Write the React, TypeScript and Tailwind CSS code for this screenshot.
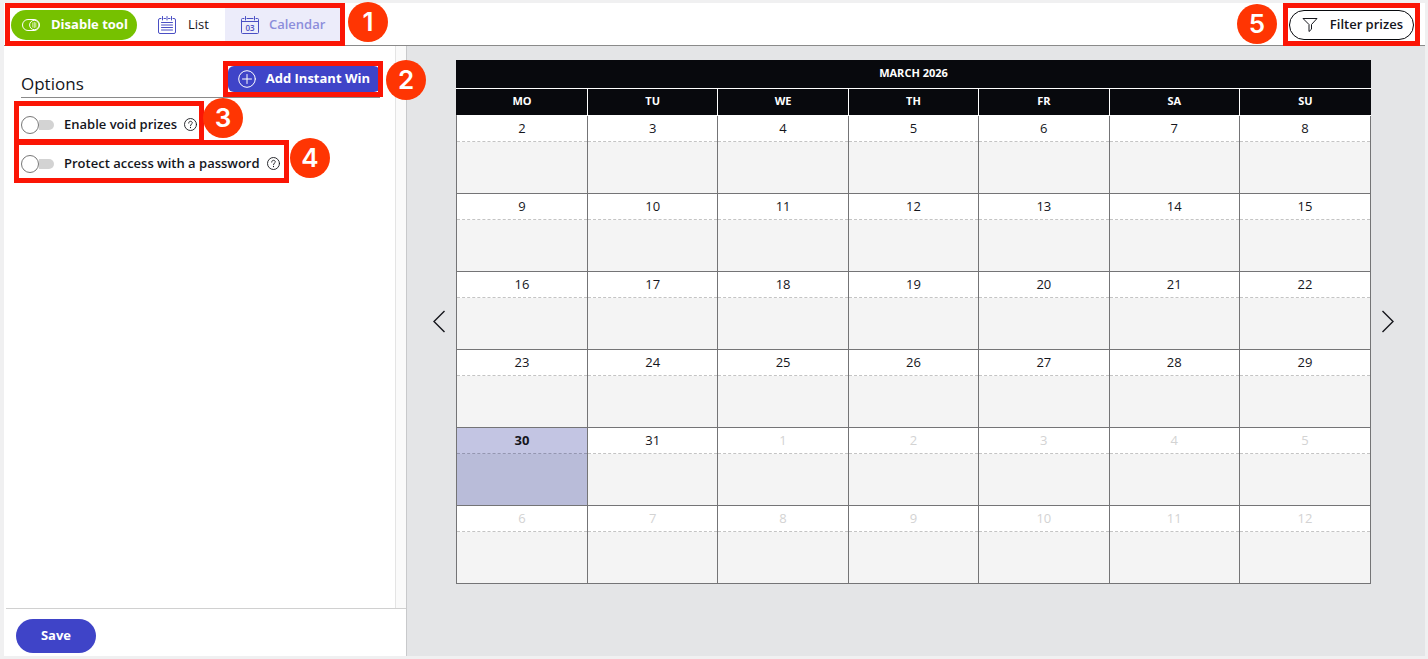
import React from 'react';
import clsx from 'clsx';

const weekDays = ['MO', 'TU', 'WE', 'TH', 'FR', 'SA', 'SU'];

const TODAY = 30;
const DAYS_IN_MONTH = 31;
const FIRST_DAY = 2;

const weeks = Array.from({ length: 6 }, (_, week) =>
  Array.from({ length: 7 }, (_, day) => {
    const n = FIRST_DAY + week * 7 + day;
    const outside = n > DAYS_IN_MONTH;
    return { label: outside ? n - DAYS_IN_MONTH : n, outside, today: n === TODAY };
  })
);

function ToggleIcon() {
  return (
    <svg className="w-[18px] h-3" viewBox="0 0 18 12" fill="none" stroke="currentColor" strokeWidth="1">
      <rect x="0.5" y="0.5" width="17" height="11" rx="5.5" />
      <circle cx="12.3" cy="6" r="4.7" />
      <path d="M10.8 3.5v5M12.3 3v6M13.8 3.5v5" strokeWidth="0.7" />
    </svg>
  );
}

function ListIcon() {
  return (
    <svg className="w-[18px] h-[18px]" viewBox="0 0 18 18" fill="none" stroke="#4a4fc4" strokeWidth="1" strokeLinecap="round">
      <path d="M3 2.5H2A1.5 1.5 0 0 0 .5 4v12A1.5 1.5 0 0 0 2 17.5h14a1.5 1.5 0 0 0 1.5-1.5V4A1.5 1.5 0 0 0 16 2.5h-1M6 2.5h1.5M10.5 2.5H12" />
      <path d="M4.5 0.5v3.5M9 0.5v3.5M13.5 0.5v3.5" />
      <path d="M3.5 6.5h11M3.5 9h11M3.5 11.5h11M3.5 14h11" />
    </svg>
  );
}

function CalendarIcon() {
  return (
    <svg className="w-[18px] h-[18px]" viewBox="0 0 18 18" fill="none" stroke="#4a4fc4" strokeWidth="1" strokeLinecap="round">
      <path d="M3 2.5H1.5a1 1 0 0 0-1 1v13a1 1 0 0 0 1 1h15a1 1 0 0 0 1-1v-13a1 1 0 0 0-1-1H15M6 2.5h6M0.5 5.5h17" />
      <path d="M4.5 0.5v3.5M13.5 0.5v3.5" />
      <text x="9" y="14.5" textAnchor="middle" fontSize="8" fontWeight="600" fill="#4a4fc4" stroke="none">
        03
      </text>
    </svg>
  );
}

function PlusIcon() {
  return (
    <svg className="w-[18px] h-[18px]" viewBox="0 0 18 18" fill="none" stroke="currentColor" strokeWidth="1" strokeLinecap="round">
      <circle cx="9" cy="9" r="8.3" />
      <path d="M9 4.5v9M4.5 9h9" />
    </svg>
  );
}

function FunnelIcon() {
  return (
    <svg className="w-4 h-4" viewBox="0 0 16 16" fill="none" stroke="currentColor" strokeWidth="1" strokeLinejoin="round">
      <path d="M1 1.5h14l-5.5 6v4.7L7 14.5v-7z" />
    </svg>
  );
}

function HelpIcon() {
  return (
    <svg className="w-[13px] h-[13px]" viewBox="0 0 13 13" fill="none" stroke="currentColor" strokeWidth="0.9" strokeLinecap="round">
      <circle cx="6.5" cy="6.5" r="6" />
      <path d="M4.7 5.1c0-1.1.8-1.8 1.8-1.8s1.8.7 1.8 1.6c0 1.2-1.8 1.3-1.8 2.7" />
      <path d="M6.5 9.4v.2" strokeWidth="1.1" />
    </svg>
  );
}

function Option({ id, label }: { id: string; label: string }) {
  return (
    <div className="flex items-center h-[39px]">
      <label htmlFor={id} className="flex items-center cursor-pointer">
        <input id={id} type="checkbox" role="switch" className="sr-only" />
        <span className="flex items-center w-[33px] h-[18px] mr-[10px]">
          <span className="shrink-0 w-[18px] h-[18px] rounded-full bg-white border border-[#777]" />
          <span className="flex-1 h-[10px] rounded-r-full bg-[#d3d3d3]" />
        </span>
        <span className="text-[13px] font-semibold">{label}</span>
      </label>
      <button type="button" aria-label={`Help: ${label}`} className="ml-[7px]">
        <HelpIcon />
      </button>
    </div>
  );
}

function Outline({ className }: { className: string }) {
  return <div className={clsx('absolute border-5 border-[#fb1505] pointer-events-none', className)} />;
}

function Marker({ n, className }: { n: number; className: string }) {
  return (
    <div
      className={clsx(
        "absolute flex items-center justify-center w-10 h-10 rounded-full bg-[#ff3503] text-white text-[26px] leading-none font-semibold font-['Inter',sans-serif]",
        className
      )}
    >
      {n}
    </div>
  );
}

function TopBar() {
  return (
    <header className="flex items-center justify-between h-[43px] shrink-0 pt-px pl-[7px] pr-[11px] bg-white border-b border-[#8a8a8a]">
      <div className="flex items-center h-full">
        <button type="button" className="flex items-center gap-[11px] h-[30px] w-[126px] pl-[11px] mr-5 rounded-full bg-[#76c100] text-white text-[13px] font-bold whitespace-nowrap">
          <ToggleIcon />
          Disable tool
        </button>
        <button type="button" className="flex items-center gap-3 h-[34px] pl-px pr-4 text-[13px]">
          <ListIcon />
          List
        </button>
        <button type="button" className="flex items-center gap-[10px] h-[34px] px-4 bg-[#ececfa] text-[#8c8edb] text-[13px] font-semibold">
          <CalendarIcon />
          Calendar
        </button>
      </div>
      <button type="button" className="flex items-center gap-3 h-[30px] pl-3 pr-[10px] rounded-full border border-[#08090d] text-[13px] font-semibold">
        <FunnelIcon />
        Filter prizes
      </button>
    </header>
  );
}

function Sidebar() {
  return (
    <aside className="flex flex-col w-[403px] shrink-0 bg-white border-r border-[#c8c9cb]">
      <div className="flex flex-1">
        <div className="flex-1 pl-[17px] pr-[15px] pt-5">
          <div className="flex items-start justify-between h-8 border-b border-[#8a8a8a]">
            <h2 className="text-[17px] leading-9">Options</h2>
            <button type="button" className="flex items-center gap-[10px] h-[26px] px-[10px] rounded-md bg-[#3f44c8] text-white text-[13px] font-bold">
              <PlusIcon />
              Add Instant Win
            </button>
          </div>
          <div className="pt-[7px]">
            <Option id="void-prizes" label="Enable void prizes" />
            <Option id="password" label="Protect access with a password" />
          </div>
        </div>
        <div className="w-[11px] bg-[#fafafa] border-l border-[#e4e4e4]" />
      </div>
      <div className="h-12 ml-[2px] pl-[10px] pt-[10px] border-t border-[#d0d0d0]">
        <button type="button" className="h-[34px] w-20 rounded-full bg-[#3f44c8] text-white text-[13px] font-bold">
          Save
        </button>
      </div>
    </aside>
  );
}

function MonthTable() {
  return (
    <table className="w-full table-fixed border-separate border-spacing-0 text-center text-[13px]">
      <colgroup>
        <col className="w-[131px]" />
        <col span={5} />
        <col className="w-[132px]" />
      </colgroup>
      <thead className="bg-[#08090d] text-white text-[11px] leading-4 font-bold">
        <tr>
          <th colSpan={7} className="h-[29px] p-0 pb-[2px] border-b border-white">MARCH 2026</th>
        </tr>
        <tr>
          {weekDays.map(day => (
            <th key={day} className="h-[27px] p-0 pb-[2px] border-b border-l border-white first:border-l-[#08090d]">
              {day}
            </th>
          ))}
        </tr>
      </thead>
      <tbody>
        {weeks.map((week, i) => (
          <tr key={i}>
            {week.map(day => (
              <td
                key={day.label}
                className={clsx(
                  'p-0 border-l border-b border-[#747476] last:border-r',
                  day.today ? 'bg-[#b9bcd9]' : 'bg-[#f4f4f4]'
                )}
              >
                <div
                  className={clsx(
                    'h-[26px] leading-6 border-b border-dashed',
                    day.today ? 'bg-[#c3c5e3] border-[#9496b0] font-bold' : 'bg-white border-[#c4c4c4]',
                    day.outside && 'text-[#d3d3d3]'
                  )}
                >
                  {day.label}
                </div>
                <div className="h-[51px]" />
              </td>
            ))}
          </tr>
        ))}
      </tbody>
    </table>
  );
}

export default function App() {
  return (
    <div className="relative flex flex-col min-h-screen pt-[3px] pb-[3px] pl-1 pr-[3px] bg-[#f0f0f1] text-[#15161c] font-['Open_Sans',sans-serif]">
      <TopBar />
      <div className="flex flex-1">
        <Sidebar />
        <main className="flex flex-1 items-start bg-[#e4e5e7] pt-[14px] pl-[25px] pr-[30px]">
          <div className="flex flex-1 items-center">
            <button type="button" aria-label="Previous month" className="mr-[11px]">
              <svg className="w-[13px] h-6" viewBox="0 0 13 24" fill="none" stroke="#15161c" strokeWidth="1.4">
                <path d="M12.5 1L2 11.5L12.5 22" />
              </svg>
            </button>
            <div className="flex-1">
              <MonthTable />
            </div>
            <button type="button" aria-label="Next month" className="ml-[11px]">
              <svg className="w-[13px] h-6" viewBox="0 0 13 24" fill="none" stroke="#15161c" strokeWidth="1.4">
                <path d="M.5 1L11 11.5L.5 22" />
              </svg>
            </button>
          </div>
        </main>
      </div>

      {/* Numbered callouts over the controls */}
      <Outline className="left-[5px] top-[3px] w-[340px] h-[43px]" />
      <Outline className="left-[223px] top-[61px] w-[160px] h-9" />
      <Outline className="left-[14px] top-[101px] w-[190px] h-[43px]" />
      <Outline className="left-[14px] top-[140px] w-[275px] h-[43px]" />
      <Outline className="right-2 top-[3px] w-[137px] h-[43px]" />
      <Marker n={1} className="left-[348px] top-[2px]" />
      <Marker n={2} className="left-[386px] top-[60px]" />
      <Marker n={3} className="left-[203px] top-[98px]" />
      <Marker n={4} className="left-[290px] top-[138px]" />
      <Marker n={5} className="right-[151px] top-1" />
    </div>
  );
}
